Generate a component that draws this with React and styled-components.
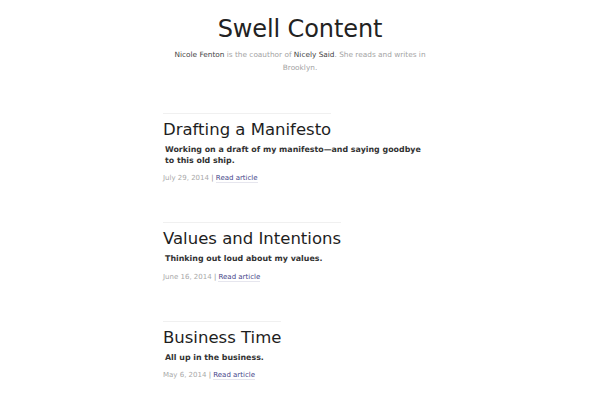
import React from "react";
import styled, { createGlobalStyle } from "styled-components";

const Global = createGlobalStyle`
  html, body { margin: 0; padding: 0; background: #fff; }
  body { font-family: "DejaVu Sans", "Liberation Sans", sans-serif; color: #222; }
`;

const Page = styled.div`
  width: 274px;
  margin: 0 auto;
  padding-top: 15px;
`;

const Masthead = styled.header`
  text-align: center;
  margin-bottom: 39px;
`;

const SiteTitle = styled.h1`
  margin: 0;
  font-size: 24px;
  line-height: 29px;
  font-weight: normal;
  letter-spacing: -0.1px;
  color: #222;
`;

const Intro = styled.p`
  margin: 4px 0 0;
  font-size: 7.35px;
  line-height: 13px;
  color: #a3a3a3;
`;

const IntroLink = styled.a`
  color: #444;
  text-decoration: none;
`;

const Article = styled.article`
  margin-bottom: 38px;
`;

const Title = styled.h2`
  display: inline-block;
  margin: 0;
  padding-top: 6px;
  border-top: 1px solid #f0f0f0;
  font-size: 16.5px;
  line-height: 20px;
  font-weight: normal;
  color: #1e1e1e;
`;

const Dek = styled.p`
  max-width: 262px;
  margin: 5px 0 0 2px;
  font-size: 7.9px;
  line-height: 10.5px;
  font-weight: bold;
  color: #333;
`;

const Meta = styled.p`
  margin: 6px 0 0;
  font-size: 7px;
  line-height: 12px;
  color: #a8a8a8;
`;

const Pipe = styled.span`
  color: #8c8c8c;
`;

const ReadLink = styled.a`
  color: #46468a;
  text-decoration: none;
  border-bottom: 1px solid #e6e6ee;
`;

const posts = [
  {
    title: "Drafting a Manifesto",
    dek: "Working on a draft of my manifesto\u2014and saying goodbye to this old ship.",
    date: "July 29, 2014",
  },
  {
    title: "Values and Intentions",
    dek: "Thinking out loud about my values.",
    date: "June 16, 2014",
  },
  {
    title: "Business Time",
    dek: "All up in the business.",
    date: "May 6, 2014",
  },
];

export default function App() {
  return (
    <>
      <Global />
      <Page>
        <Masthead>
          <SiteTitle>Swell Content</SiteTitle>
          <Intro>
            <IntroLink href="#">Nicole Fenton</IntroLink> is the coauthor of{" "}
            <IntroLink href="#">Nicely Said</IntroLink>. She reads and writes in Brooklyn.
          </Intro>
        </Masthead>
        {posts.map((p) => (
          <Article key={p.title}>
            <Title>{p.title}</Title>
            <Dek>{p.dek}</Dek>
            <Meta>
              {p.date} <Pipe>|</Pipe> <ReadLink href="#">Read article</ReadLink>
            </Meta>
          </Article>
        ))}
      </Page>
    </>
  );
}
